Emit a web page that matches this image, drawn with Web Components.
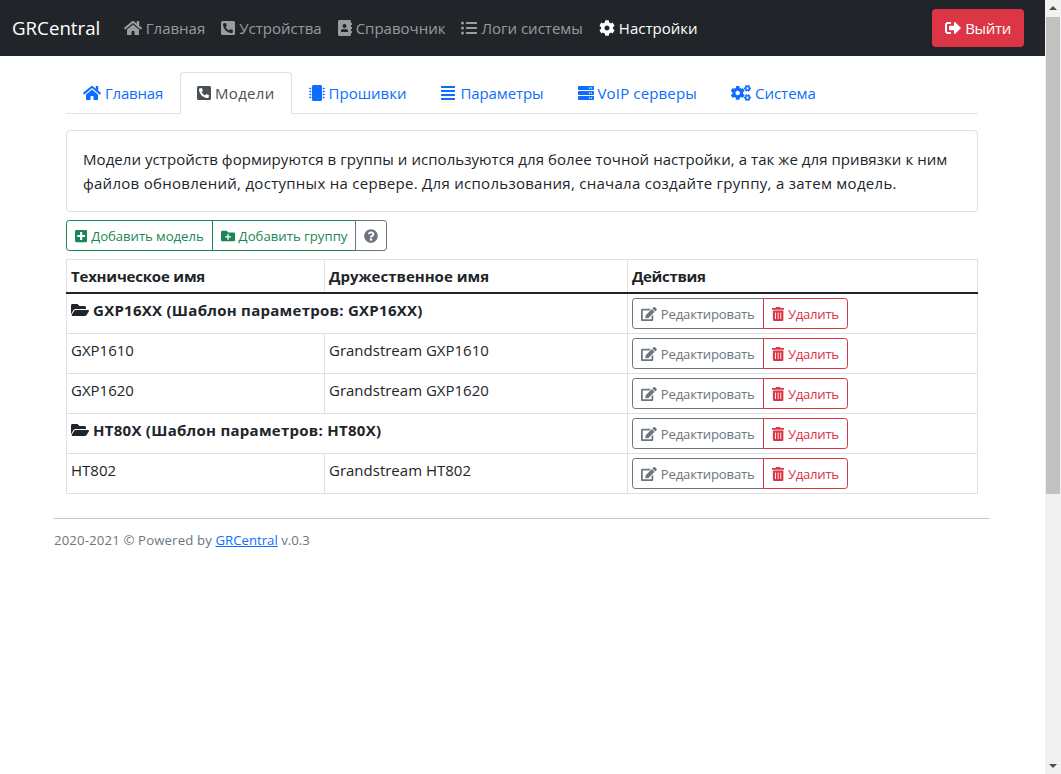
<!DOCTYPE html>
<html lang="ru">
<head>
<meta charset="utf-8">
<title>GRCentral</title>
<style>
html, body { margin: 0; height: 100%; overflow: hidden; }
body { font: 15px/24px "Open Sans", "Liberation Sans", sans-serif; color: #212529; background: #fff; }
</style>
</head>
<body>
<app-page>
  <main-navbar>
    <nav-link icon="home" slot="links">Главная</nav-link>
    <nav-link icon="phone" slot="links">Устройства</nav-link>
    <nav-link icon="book" slot="links">Справочник</nav-link>
    <nav-link icon="list" slot="links">Логи системы</nav-link>
    <nav-link icon="cog" active slot="links">Настройки</nav-link>
  </main-navbar>
  <page-container>
    <tab-bar>
      <tab-link icon="home" style="letter-spacing:-.2px">Главная</tab-link>
      <tab-link icon="phone" active style="letter-spacing:.3px">Модели</tab-link>
      <tab-link icon="chip">Прошивки</tab-link>
      <tab-link icon="justify" style="letter-spacing:-.1px">Параметры</tab-link>
      <tab-link icon="server" style="letter-spacing:.15px">VoIP серверы</tab-link>
      <tab-link icon="cogs">Система</tab-link>
    </tab-bar>
    <info-card>Модели устройств формируются в группы и используются для более точной настройки, а так же для привязки к ним <span style="letter-spacing:.28px">файлов обновлений, доступных на сервере. Для использования, сначала создайте группу, а затем модель.</span></info-card>
    <tool-bar></tool-bar>
    <models-table></models-table>
  </page-container>
  <page-footer></page-footer>
</app-page>

<script>
const ICONS = {
  home: [576, "M280.37 148.26L96 300.11V464a16 16 0 0 0 16 16l112.06-.29a16 16 0 0 0 15.92-16V368a16 16 0 0 1 16-16h64a16 16 0 0 1 16 16v95.64a16 16 0 0 0 16 16.05L464 480a16 16 0 0 0 16-16V300L295.67 148.26a12.19 12.19 0 0 0-15.3 0zM571.6 251.47L488 182.56V44.05a12 12 0 0 0-12-12h-56a12 12 0 0 0-12 12v72.61L318.47 43a48 48 0 0 0-61 0L4.34 251.47a12 12 0 0 0-1.6 16.9l25.5 31A12 12 0 0 0 45.15 301l235.22-193.74a12.19 12.19 0 0 1 15.3 0L530.9 301a12 12 0 0 0 16.9-1.6l25.5-31a12 12 0 0 0-1.7-16.93z"],
  phone: [448, "M400 32H48A48 48 0 0 0 0 80v352a48 48 0 0 0 48 48h352a48 48 0 0 0 48-48V80a48 48 0 0 0-48-48zm-16.39 307.37l-15 65A15 15 0 0 1 354 416C194 416 64 286.29 64 126a15.7 15.7 0 0 1 11.63-14.61l65-15A18.23 18.23 0 0 1 144 96a16.27 16.27 0 0 1 13.79 9.09l30 70A17.9 17.9 0 0 1 189 181a17 17 0 0 1-5.5 11.61l-37.89 31a231.91 231.91 0 0 0 110.78 110.78l31-37.89A17 17 0 0 1 299 291a17.85 17.85 0 0 1 5.91 1.21l70 30A16.25 16.25 0 0 1 384 336a17.41 17.41 0 0 1-.39 3.37z"],
  book: [448, "M436 160c6.6 0 12-5.4 12-12v-40c0-6.6-5.4-12-12-12h-20V48c0-26.5-21.5-48-48-48H48C21.5 0 0 21.5 0 48v416c0 26.5 21.5 48 48 48h320c26.5 0 48-21.5 48-48v-48h20c6.6 0 12-5.4 12-12v-40c0-6.6-5.4-12-12-12h-20v-64h20c6.6 0 12-5.4 12-12v-40c0-6.6-5.4-12-12-12h-20v-64h20zm-228-32c35.3 0 64 28.7 64 64s-28.7 64-64 64-64-28.7-64-64 28.7-64 64-64zm112 236.8c0 10.6-10 19.2-22.4 19.2H118.4C106 384 96 375.4 96 364.8v-19.2c0-31.8 30.1-57.6 67.2-57.6h5c12.3 5.1 25.7 8 39.8 8s27.6-2.9 39.8-8h5c37.1 0 67.2 25.8 67.2 57.6v19.2z"],
  list: [512, "M48 48a48 48 0 1 0 48 48 48 48 0 0 0-48-48zm0 160a48 48 0 1 0 48 48 48 48 0 0 0-48-48zm0 160a48 48 0 1 0 48 48 48 48 0 0 0-48-48zm448 16H176a16 16 0 0 0-16 16v32a16 16 0 0 0 16 16h320a16 16 0 0 0 16-16v-32a16 16 0 0 0-16-16zm0-320H176a16 16 0 0 0-16 16v32a16 16 0 0 0 16 16h320a16 16 0 0 0 16-16V80a16 16 0 0 0-16-16zm0 160H176a16 16 0 0 0-16 16v32a16 16 0 0 0 16 16h320a16 16 0 0 0 16-16v-32a16 16 0 0 0-16-16z"],
  cog: [512, "M487.4 315.7l-42.6-24.6c4.3-23.2 4.3-47 0-70.2l42.6-24.6c4.9-2.8 7.1-8.6 5.5-14-11.1-35.6-30-67.8-54.7-94.6-3.8-4.1-10-5.1-14.8-2.3L380.8 110c-17.9-15.4-38.5-27.3-60.8-35.1V25.8c0-5.6-3.9-10.5-9.4-11.7-36.7-8.2-74.3-7.8-109.2 0-5.5 1.2-9.4 6.1-9.4 11.7V75c-22.2 7.9-42.8 19.8-60.8 35.1L88.7 85.5c-4.9-2.8-11-1.9-14.8 2.3-24.7 26.7-43.6 58.9-54.7 94.6-1.7 5.4.6 11.2 5.5 14L67.3 221c-4.3 23.2-4.3 47 0 70.2l-42.6 24.6c-4.9 2.8-7.1 8.6-5.5 14 11.1 35.6 30 67.8 54.7 94.6 3.8 4.1 10 5.1 14.8 2.3l42.6-24.6c17.9 15.4 38.5 27.3 60.8 35.1v49.2c0 5.6 3.9 10.5 9.4 11.7 36.7 8.2 74.3 7.8 109.2 0 5.5-1.2 9.4-6.1 9.4-11.7v-49.2c22.2-7.9 42.8-19.8 60.8-35.1l42.6 24.6c4.9 2.8 11 1.9 14.8-2.3 24.7-26.7 43.6-58.9 54.7-94.6 1.5-5.5-.7-11.3-5.6-14.1zM256 336c-44.1 0-80-35.9-80-80s35.9-80 80-80 80 35.9 80 80-35.9 80-80 80z"],
  logout: [512, "M497 273L329 441c-15 15-41 4.5-41-17v-96H152c-13.3 0-24-10.7-24-24v-96c0-13.3 10.7-24 24-24h136V88c0-21.4 25.9-32 41-17l168 168c9.3 9.4 9.3 24.6 0 34zM192 436v-40c0-6.6-5.4-12-12-12H96c-17.7 0-32-14.3-32-32V160c0-17.7 14.3-32 32-32h84c6.6 0 12-5.4 12-12V76c0-6.6-5.4-12-12-12H96c-53 0-96 43-96 96v192c0 53 43 96 96 96h84c6.6 0 12-5.4 12-12z"],
  chip: [512, "M416 48v416c0 26.51-21.49 48-48 48H144c-26.51 0-48-21.49-48-48V48c0-26.51 21.49-48 48-48h224c26.51 0 48 21.49 48 48zm96 58v12a6 6 0 0 1-6 6h-18v6a6 6 0 0 1-6 6h-42V88h42a6 6 0 0 1 6 6v6h18a6 6 0 0 1 6 6zm0 96v12a6 6 0 0 1-6 6h-18v6a6 6 0 0 1-6 6h-42v-48h42a6 6 0 0 1 6 6v6h18a6 6 0 0 1 6 6zm0 96v12a6 6 0 0 1-6 6h-18v6a6 6 0 0 1-6 6h-42v-48h42a6 6 0 0 1 6 6v6h18a6 6 0 0 1 6 6zm0 96v12a6 6 0 0 1-6 6h-18v6a6 6 0 0 1-6 6h-42v-48h42a6 6 0 0 1 6 6v6h18a6 6 0 0 1 6 6zM30 376h42v48H30a6 6 0 0 1-6-6v-6H6a6 6 0 0 1-6-6v-12a6 6 0 0 1 6-6h18v-6a6 6 0 0 1 6-6zm0-96h42v48H30a6 6 0 0 1-6-6v-6H6a6 6 0 0 1-6-6v-12a6 6 0 0 1 6-6h18v-6a6 6 0 0 1 6-6zm0-96h42v48H30a6 6 0 0 1-6-6v-6H6a6 6 0 0 1-6-6v-12a6 6 0 0 1 6-6h18v-6a6 6 0 0 1 6-6zm0-96h42v48H30a6 6 0 0 1-6-6v-6H6a6 6 0 0 1-6-6v-12a6 6 0 0 1 6-6h18v-6a6 6 0 0 1 6-6z"],
  justify: [448, "M432 416H16a16 16 0 0 0-16 16v32a16 16 0 0 0 16 16h416a16 16 0 0 0 16-16v-32a16 16 0 0 0-16-16zm0-128H16a16 16 0 0 0-16 16v32a16 16 0 0 0 16 16h416a16 16 0 0 0 16-16v-32a16 16 0 0 0-16-16zm0-128H16a16 16 0 0 0-16 16v32a16 16 0 0 0 16 16h416a16 16 0 0 0 16-16v-32a16 16 0 0 0-16-16zm0-128H16A16 16 0 0 0 0 48v32a16 16 0 0 0 16 16h416a16 16 0 0 0 16-16V48a16 16 0 0 0-16-16z"],
  server: [512, "M480 160H32c-17.673 0-32-14.327-32-32V64c0-17.673 14.327-32 32-32h448c17.673 0 32 14.327 32 32v64c0 17.673-14.327 32-32 32zm-48-88c-13.255 0-24 10.745-24 24s10.745 24 24 24 24-10.745 24-24-10.745-24-24-24zm-64 0c-13.255 0-24 10.745-24 24s10.745 24 24 24 24-10.745 24-24-10.745-24-24-24zm112 248H32c-17.673 0-32-14.327-32-32v-64c0-17.673 14.327-32 32-32h448c17.673 0 32 14.327 32 32v64c0 17.673-14.327 32-32 32zm-48-88c-13.255 0-24 10.745-24 24s10.745 24 24 24 24-10.745 24-24-10.745-24-24-24zm-64 0c-13.255 0-24 10.745-24 24s10.745 24 24 24 24-10.745 24-24-10.745-24-24-24zm112 248H32c-17.673 0-32-14.327-32-32v-64c0-17.673 14.327-32 32-32h448c17.673 0 32 14.327 32 32v64c0 17.673-14.327 32-32 32zm-48-88c-13.255 0-24 10.745-24 24s10.745 24 24 24 24-10.745 24-24-10.745-24-24-24zm-64 0c-13.255 0-24 10.745-24 24s10.745 24 24 24 24-10.745 24-24-10.745-24-24-24z"],
  cogs: [640, "M512.1 191l-8.2 14.3c-3 5.3-9.4 7.5-15.1 5.4-11.8-4.4-22.6-10.7-32.1-18.6-4.6-3.8-5.8-10.5-2.8-15.7l8.2-14.3c-6.9-8-12.3-17.3-15.9-27.4h-16.5c-6 0-11.2-4.3-12.2-10.3-2-12-2.1-24.6 0-37.1 1-6 6.2-10.4 12.2-10.4h16.5c3.6-10.1 9-19.4 15.9-27.4l-8.2-14.3c-3-5.2-1.9-11.9 2.8-15.7 9.5-7.9 20.4-14.2 32.1-18.6 5.7-2.1 12.1.1 15.1 5.4l8.2 14.3c10.5-1.9 21.2-1.9 31.7 0L552 6.3c3-5.3 9.4-7.5 15.1-5.4 11.8 4.4 22.6 10.7 32.1 18.6 4.6 3.8 5.8 10.5 2.8 15.7l-8.2 14.3c6.9 8 12.3 17.3 15.9 27.4h16.5c6 0 11.2 4.3 12.2 10.3 2 12 2.1 24.6 0 37.1-1 6-6.2 10.4-12.2 10.4h-16.5c-3.6 10.1-9 19.4-15.9 27.4l8.2 14.3c3 5.2 1.9 11.9-2.8 15.7-9.5 7.9-20.4 14.2-32.1 18.6-5.7 2.1-12.1-.1-15.1-5.4l-8.2-14.3c-10.4 1.9-21.2 1.9-31.7 0zm-10.5-58.8c38.5 29.6 82.4-14.3 52.8-52.8-38.5-29.7-82.4 14.3-52.8 52.8zM386.3 286.1l33.7 16.8c10.1 5.8 14.5 18.1 10.5 29.1-8.9 24.2-26.4 46.4-42.6 65.8-7.4 8.9-20.2 11.1-30.3 5.3l-29.1-16.8c-16 13.7-34.6 24.6-54.9 31.7v33.6c0 11.6-8.3 21.6-19.7 23.6-24.6 4.2-50.4 4.4-75.9 0-11.5-2-20-11.9-20-23.6V418c-20.3-7.2-38.9-18-54.9-31.7L74 403c-10 5.8-22.9 3.6-30.3-5.3-16.2-19.4-33.3-41.6-42.2-65.7-4-10.9.4-23.2 10.5-29.1l33.3-16.8c-3.9-20.9-3.9-42.4 0-63.4L12 205.8c-10.1-5.8-14.6-18.1-10.5-29 8.9-24.2 26-46.4 42.2-65.8 7.4-8.9 20.2-11.1 30.3-5.3l29.1 16.8c16-13.7 34.6-24.6 54.9-31.7V57.1c0-11.5 8.2-21.5 19.6-23.5 24.6-4.2 50.5-4.4 76-.1 11.5 2 20 11.9 20 23.6v33.6c20.3 7.2 38.9 18 54.9 31.7l29.1-16.8c10-5.8 22.9-3.6 30.3 5.3 16.2 19.4 33.2 41.6 42.1 65.8 4 10.9.1 23.2-10 29.1l-33.7 16.8c3.9 21 3.9 42.5 0 63.5zm-117.6 21.1c59.2-77-28.7-164.9-105.7-105.7-59.2 77 28.7 164.9 105.7 105.7zm243.4 182.7l-8.2 14.3c-3 5.3-9.4 7.5-15.1 5.4-11.8-4.4-22.6-10.7-32.1-18.6-4.6-3.8-5.8-10.5-2.8-15.7l8.2-14.3c-6.9-8-12.3-17.3-15.9-27.4h-16.5c-6 0-11.2-4.3-12.2-10.3-2-12-2.1-24.6 0-37.1 1-6 6.2-10.4 12.2-10.4h16.5c3.6-10.1 9-19.4 15.9-27.4l-8.2-14.3c-3-5.2-1.9-11.9 2.8-15.7 9.5-7.9 20.4-14.2 32.1-18.6 5.7-2.1 12.1.1 15.1 5.4l8.2 14.3c10.5-1.9 21.2-1.9 31.7 0l8.2-14.3c3-5.3 9.4-7.5 15.1-5.4 11.8 4.4 22.6 10.7 32.1 18.6 4.6 3.8 5.8 10.5 2.8 15.7l-8.2 14.3c6.9 8 12.3 17.3 15.9 27.4h16.5c6 0 11.2 4.3 12.2 10.3 2 12 2.1 24.6 0 37.1-1 6-6.2 10.4-12.2 10.4h-16.5c-3.6 10.1-9 19.4-15.9 27.4l8.2 14.3c3 5.2 1.9 11.9-2.8 15.7-9.5 7.9-20.4 14.2-32.1 18.6-5.7 2.1-12.1-.1-15.1-5.4l-8.2-14.3c-10.4 1.9-21.2 1.9-31.7 0zM501.6 431c38.5 29.6 82.4-14.3 52.8-52.8-38.5-29.6-82.4 14.3-52.8 52.8z"],
  plus: [448, "M400 32H48C21.5 32 0 53.5 0 80v352c0 26.5 21.5 48 48 48h352c26.5 0 48-21.5 48-48V80c0-26.5-21.5-48-48-48zm-32 252c0 6.6-5.4 12-12 12h-92v92c0 6.6-5.4 12-12 12h-56c-6.6 0-12-5.4-12-12v-92H92c-6.6 0-12-5.4-12-12v-56c0-6.6 5.4-12 12-12h92v-92c0-6.6 5.4-12 12-12h56c6.6 0 12 5.4 12 12v92h92c6.6 0 12 5.4 12 12v56z"],
  folderPlus: [512, "M464 128H272l-54.63-54.63c-6-6-14.14-9.37-22.63-9.37H48C21.49 64 0 85.49 0 112v288c0 26.51 21.49 48 48 48h416c26.51 0 48-21.49 48-48V176c0-26.51-21.49-48-48-48zm-96 168c0 8.84-7.16 16-16 16h-72v72c0 8.84-7.16 16-16 16h-16c-8.84 0-16-7.16-16-16v-72h-72c-8.84 0-16-7.16-16-16v-16c0-8.84 7.16-16 16-16h72v-72c0-8.84 7.16-16 16-16h16c8.84 0 16 7.16 16 16v72h72c8.84 0 16 7.16 16 16v16z"],
  question: [512, "M504 256c0 136.997-111.043 248-248 248S8 392.997 8 256C8 119.083 119.043 8 256 8s248 111.083 248 248zM262.655 90c-54.497 0-89.255 22.957-116.549 63.758-3.536 5.286-2.353 12.415 2.715 16.258l34.699 26.31c5.205 3.947 12.621 3.008 16.665-2.122 17.864-22.658 30.113-35.797 57.303-35.797 20.429 0 45.698 13.148 45.698 32.958 0 14.976-12.363 22.667-32.534 33.976C247.128 238.528 216 254.941 216 296v4c0 6.627 5.373 12 12 12h56c6.627 0 12-5.373 12-12v-1.333c0-28.462 83.186-29.647 83.186-106.667 0-58.002-60.165-102-116.531-102zM256 338c-25.365 0-46 20.635-46 46 0 25.364 20.635 46 46 46s46-20.636 46-46c0-25.365-20.635-46-46-46z"],
  folderOpen: [576, "M572.694 292.093L500.27 416.248A63.997 63.997 0 0 1 444.989 448H45.025c-18.523 0-30.064-20.093-20.731-36.093l72.424-124.155A64 64 0 0 1 152 256h399.964c18.523 0 30.064 20.093 20.73 36.093zM152 224h328v-48c0-26.51-21.49-48-48-48H272l-64-64H48C21.49 64 0 85.49 0 112v278.046l69.077-118.418C86.214 242.25 117.989 224 152 224z"],
  edit: [576, "M402.6 83.2l90.2 90.2c3.8 3.8 3.8 10 0 13.8L274.4 405.6l-92.8 10.3c-12.4 1.4-22.9-9.1-21.5-21.5l10.3-92.8L388.8 83.2c3.8-3.8 10-3.8 13.8 0zm162-22.9l-48.8-48.8c-15.2-15.2-39.9-15.2-55.2 0l-35.4 35.4c-3.8 3.8-3.8 10 0 13.8l90.2 90.2c3.8 3.8 10 3.8 13.8 0l35.4-35.4c15.2-15.3 15.2-40 0-55.2zM384 346.2V448H64V128h229.8c3.2 0 6.2-1.3 8.5-3.5l40-40c7.6-7.6 2.2-20.5-8.5-20.5H48C21.5 64 0 85.5 0 112v352c0 26.5 21.5 48 48 48h352c26.5 0 48-21.5 48-48V306.2c0-10.7-12.9-16-20.5-8.5l-40 40c-2.2 2.3-3.5 5.3-3.5 8.5z"],
  trash: [448, "M32 464a48 48 0 0 0 48 48h288a48 48 0 0 0 48-48V128H32zm272-256a16 16 0 0 1 32 0v224a16 16 0 0 1-32 0zm-96 0a16 16 0 0 1 32 0v224a16 16 0 0 1-32 0zm-96 0a16 16 0 0 1 32 0v224a16 16 0 0 1-32 0zM432 32H312l-9.4-18.7A24 24 0 0 0 281.1 0H166.8a23.72 23.72 0 0 0-21.4 13.3L136 32H16A16 16 0 0 0 0 48v32a16 16 0 0 0 16 16h416a16 16 0 0 0 16-16V48a16 16 0 0 0-16-16z"]
};

class FaIcon extends HTMLElement {
  connectedCallback() {
    const [w, d] = ICONS[this.getAttribute("name")];
    const size = this.getAttribute("size") || "16";
    this.attachShadow({ mode: "open" }).innerHTML = `
      <style>
      :host { display: inline-flex; flex: none; }
      :host([name=justify]) { margin: 0 1px; }
      svg { display: block; fill: currentColor; }
      </style>
      <svg viewBox="0 0 ${w} 512" width="${size * w / 512}" height="${size}"><path d="${d}"/></svg>`;
  }
}
customElements.define("fa-icon", FaIcon);

const pageTemplate = document.createElement("template");
pageTemplate.innerHTML = `
<style>
:host { display: grid; grid-template-columns: 1045px 16px; height: 774px; }
.bar { background: #f1f1f1; display: flex; flex-direction: column; align-items: center; justify-content: space-between; padding: 6px 0; box-sizing: border-box; position: relative; }
.thumb { position: absolute; left: 1px; right: 1px; top: 17px; height: 477px; background: #c1c1c1; }
.up { border: 4px solid transparent; border-top: 0; border-bottom: 4px solid #505050; }
.down { border: 4px solid transparent; border-bottom: 0; border-top: 4px solid #505050; }
</style>
<div class="view"><slot></slot></div>
<div class="bar"><div class="up"></div><div class="thumb"></div><div class="down"></div></div>`;
class AppPage extends HTMLElement {
  constructor() {
    super();
    this.attachShadow({ mode: "open" }).appendChild(pageTemplate.content.cloneNode(true));
  }
}
customElements.define("app-page", AppPage);

const navbarTemplate = document.createElement("template");
navbarTemplate.innerHTML = `
<style>
:host { display: flex; align-items: center; height: 56px; background: #212529; padding: 0 21px 0 12px; box-sizing: border-box; }
.brand { color: #fff; font-size: 18.7px; line-height: 30px; margin-right: 15.5px; }
.links { display: flex; flex: 1; }
.logout { display: flex; align-items: center; gap: 4.5px; height: 38px; box-sizing: border-box; padding: 0 13px; background: #dc3545; color: #fff; border-radius: 4px; letter-spacing: -.3px; }
</style>
<span class="brand">GRCentral</span>
<div class="links"><slot name="links"></slot></div>
<a class="logout"><fa-icon name="logout"></fa-icon>Выйти</a>`;
class MainNavbar extends HTMLElement {
  constructor() {
    super();
    this.attachShadow({ mode: "open" }).appendChild(navbarTemplate.content.cloneNode(true));
  }
}
customElements.define("main-navbar", MainNavbar);

class NavLink extends HTMLElement {
  connectedCallback() {
    this.attachShadow({ mode: "open" }).innerHTML = `
      <style>
      :host { display: flex; align-items: center; gap: 4px; padding: 8px; color: rgba(255,255,255,.55); }
      :host([active]) { color: #fff; }
      </style>
      <fa-icon name="${this.getAttribute("icon")}"></fa-icon><slot></slot>`;
  }
}
customElements.define("nav-link", NavLink);

class PageContainer extends HTMLElement {
  constructor() {
    super();
    this.attachShadow({ mode: "open" }).innerHTML = `
      <style>
      :host { display: flex; flex-direction: column; margin: 16px 67px 0 66px; }
      </style>
      <slot></slot>`;
  }
}
customElements.define("page-container", PageContainer);

class TabBar extends HTMLElement {
  constructor() {
    super();
    this.attachShadow({ mode: "open" }).innerHTML = `
      <style>
      :host { display: flex; border-bottom: 1px solid #dee2e6; height: 41px; }
      </style>
      <slot></slot>`;
  }
}
customElements.define("tab-bar", TabBar);

class TabLink extends HTMLElement {
  connectedCallback() {
    this.attachShadow({ mode: "open" }).innerHTML = `
      <style>
      :host { display: flex; align-items: center; gap: 4px; height: 42px; box-sizing: border-box; padding: 0 16px; color: #0d6efd; border: 1px solid transparent; border-radius: 4px 4px 0 0; }
      :host([active]) { color: #495057; background: #fff; border-color: #dee2e6 #dee2e6 #fff; }
      </style>
      <fa-icon name="${this.getAttribute("icon")}"></fa-icon><slot></slot>`;
  }
}
customElements.define("tab-link", TabLink);

class InfoCard extends HTMLElement {
  constructor() {
    super();
    this.attachShadow({ mode: "open" }).innerHTML = `
      <style>
      :host { display: block; margin-top: 16px; padding: 16px; border: 1px solid #dfdfdf; border-radius: 4px; letter-spacing: .06px; }
      </style>
      <slot></slot>`;
  }
}
customElements.define("info-card", InfoCard);

class OutlineBtn extends HTMLElement {
  connectedCallback() {
    this.attachShadow({ mode: "open" }).innerHTML = `
      <style>
      :host { display: flex; align-items: center; gap: 4px; height: 31px; box-sizing: border-box; padding: 1px 8px 0; border: 1px solid var(--c); color: var(--c); font-size: 13.2px; line-height: 21px; margin-left: -1px; position: relative; }
      :host(:first-of-type) { margin-left: 0; border-radius: 3.2px 0 0 3.2px; }
      :host(:last-of-type) { border-radius: 0 3.2px 3.2px 0; }
      :host([tone=success]) { --c: #198754; }
      :host([tone=secondary]) { --c: #6c757d; }
      :host([tone=danger]) { --c: #dc3545; }
      fa-icon { margin-top: -1px; }
      </style>
      <fa-icon name="${this.getAttribute("icon")}" size="14"></fa-icon><slot></slot>`;
  }
}
customElements.define("outline-btn", OutlineBtn);

class ToolBar extends HTMLElement {
  constructor() {
    super();
    this.attachShadow({ mode: "open" }).innerHTML = `
      <style>
      :host { display: flex; margin-top: 8px; }
      .first { letter-spacing: -.07px; }
      </style>
      <outline-btn class="first" tone="success" icon="plus">Добавить модель</outline-btn>
      <outline-btn tone="success" icon="folderPlus">Добавить группу</outline-btn>
      <outline-btn tone="secondary" icon="question"></outline-btn>`;
  }
}
customElements.define("tool-bar", ToolBar);

const tableTemplate = document.createElement("template");
tableTemplate.innerHTML = `
<style>
:host { display: block; margin-top: 8px; }
table { width: 100%; table-layout: fixed; border-collapse: collapse; }
th, td { border: 1px solid #dee2e6; padding: 4px; text-align: left; vertical-align: top; }
th { height: 24px; border-bottom: 2px solid #212529; }
.group { font-weight: bold; letter-spacing: .27px; }
.group fa-icon { vertical-align: -2px; margin-right: 4px; }
.actions { display: flex; }
.edit { letter-spacing: -.2px; }
.del { letter-spacing: -.3px; }
</style>
<table>
  <colgroup><col style="width:258px"><col style="width:303px"><col></colgroup>
  <thead><tr><th style="letter-spacing:-.2px">Техническое имя</th><th>Дружественное имя</th><th style="letter-spacing:-.35px">Действия</th></tr></thead>
  <tbody></tbody>
</table>`;

const MODEL_ROWS = [
  { group: "GXP16XX (Шаблон параметров: GXP16XX)" },
  { tech: "GXP1610", name: "Grandstream GXP1610" },
  { tech: "GXP1620", name: "Grandstream GXP1620" },
  { group: "HT80X (Шаблон параметров: HT80X)" },
  { tech: "HT802", name: "Grandstream HT802" }
];

class ModelsTable extends HTMLElement {
  constructor() {
    super();
    this.attachShadow({ mode: "open" }).appendChild(tableTemplate.content.cloneNode(true));
    const actions = `<td><div class="actions">
      <outline-btn class="edit" tone="secondary" icon="edit">Редактировать</outline-btn>
      <outline-btn class="del" tone="danger" icon="trash">Удалить</outline-btn>
    </div></td>`;
    this.shadowRoot.querySelector("tbody").innerHTML = MODEL_ROWS.map(r => r.group
      ? `<tr><td colspan="2" class="group"><fa-icon name="folderOpen"></fa-icon>${r.group}</td>${actions}</tr>`
      : `<tr><td>${r.tech}</td><td>${r.name}</td>${actions}</tr>`).join("");
  }
}
customElements.define("models-table", ModelsTable);

class PageFooter extends HTMLElement {
  constructor() {
    super();
    this.attachShadow({ mode: "open" }).innerHTML = `
      <style>
      :host { display: block; margin: 24px 55px 0 54px; padding-top: 9px; border-top: 1px solid #c6c7c8; color: #6c757d; font-size: 13.2px; line-height: 24px; }
      a { color: #0d6efd; text-decoration: underline; }
      span { letter-spacing: .14px; }
      </style>
      <span>2020-2021 © Powered by </span><a>GRCentral</a> v.0.3`;
  }
}
customElements.define("page-footer", PageFooter);
</script>
</body>
</html>
